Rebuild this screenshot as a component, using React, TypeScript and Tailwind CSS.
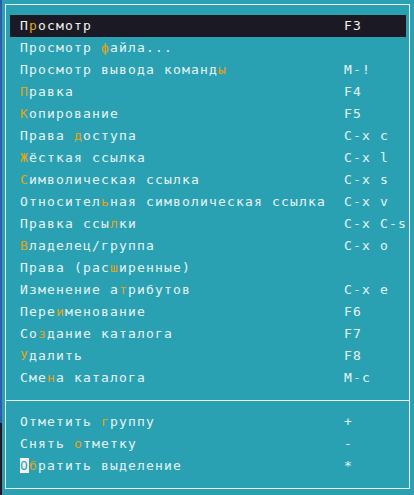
import React from 'react'

type Item = {
  pre: string
  key: string
  post: string
  shortcut?: string
  active?: boolean
  cursor?: string
}

const topItems: Item[] = [
  { pre: 'П', key: 'р', post: 'осмотр', shortcut: 'F3', active: true },
  { pre: 'Просмотр ', key: 'ф', post: 'айла...' },
  { pre: 'Просмотр вывода команд', key: 'ы', post: '', shortcut: 'M-!' },
  { pre: '', key: 'П', post: 'равка', shortcut: 'F4' },
  { pre: '', key: 'К', post: 'опирование', shortcut: 'F5' },
  { pre: 'Права ', key: 'д', post: 'оступа', shortcut: 'C-x c' },
  { pre: '', key: 'Ж', post: 'ёсткая ссылка', shortcut: 'C-x l' },
  { pre: '', key: 'С', post: 'имволическая ссылка', shortcut: 'C-x s' },
  { pre: 'Относител', key: 'ь', post: 'ная символическая ссылка', shortcut: 'C-x v' },
  { pre: 'Правка ссы', key: 'л', post: 'ки', shortcut: 'C-x C-s' },
  { pre: '', key: 'В', post: 'ладелец/группа', shortcut: 'C-x o' },
  { pre: 'Права (рас', key: 'ш', post: 'иренные)' },
  { pre: 'Изменение а', key: 'т', post: 'рибутов', shortcut: 'C-x e' },
  { pre: 'Пере', key: 'и', post: 'менование', shortcut: 'F6' },
  { pre: 'Со', key: 'з', post: 'дание каталога', shortcut: 'F7' },
  { pre: '', key: 'У', post: 'далить', shortcut: 'F8' },
  { pre: 'Сме', key: 'н', post: 'а каталога', shortcut: 'M-c' },
]

const bottomItems: Item[] = [
  { pre: 'Отметить ', key: 'г', post: 'руппу', shortcut: '+' },
  { pre: 'Снять ', key: 'о', post: 'тметку', shortcut: '-' },
  { pre: '', key: 'б', post: 'ратить выделение', shortcut: '*', cursor: 'О' },
]

function Row({ item }: { item: Item }) {
  return (
    <div
      className={
        'grid h-[22px] grid-cols-[324px_1fr] items-center pl-[10px] leading-[22px] whitespace-pre ' +
        (item.active ? 'bg-[#1b1a24] text-[#f2f2f2]' : 'text-[#e6f4f5]')
      }
    >
      <span>
        {item.cursor ? (
          <span className="bg-[#f4f4f4] text-[#2aa1b3]">{item.cursor}</span>
        ) : null}
        {item.pre}
        <span className="text-[#e3a414]">{item.key}</span>
        {item.post}
      </span>
      <span>{item.shortcut ?? ''}</span>
    </div>
  )
}

export default function App() {
  return (
    <div
      className="flex h-[495px] w-[414px] overflow-hidden bg-[#2aa1b3] text-[13px] tracking-[1.17px]"
      style={{ fontFamily: '"DejaVu Sans Mono", "Liberation Mono", monospace' }}
    >
      <div className="flex w-[2px] flex-col">
        <div className="h-[423px] bg-[#2a5ea6]" />
        <div className="flex-1 bg-[#1b1a24]" />
      </div>
      <div className="ml-[3px] mt-[4px] flex h-[485px] w-[405px] flex-col border border-[#f0f0f0]">
        <div className="pl-[4px] pr-[3px] pt-[10px]">
          {topItems.map((it, i) => (
            <Row key={i} item={it} />
          ))}
        </div>
        <div className="mt-[11px] border-t border-[#f0f0f0]" />
        <div className="pl-[4px] pr-[3px] pt-[10px]">
          {bottomItems.map((it, i) => (
            <Row key={i} item={it} />
          ))}
        </div>
      </div>
    </div>
  )
}
